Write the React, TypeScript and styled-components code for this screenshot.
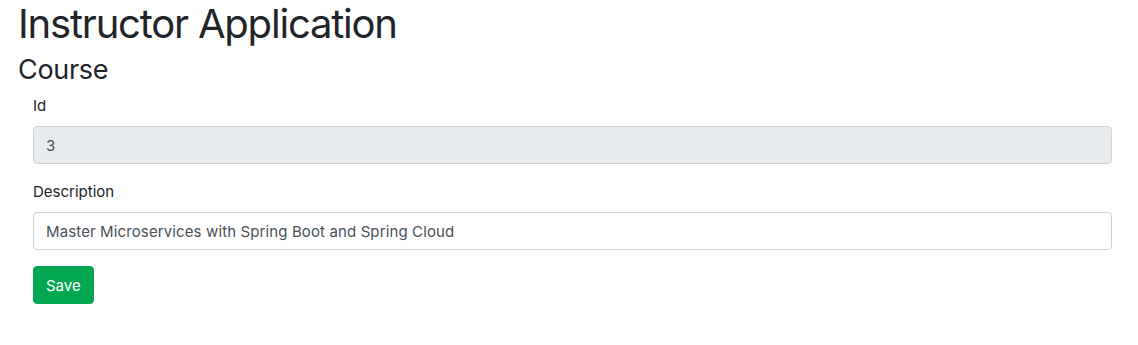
import React from "react";
import styled, { createGlobalStyle } from "styled-components";

const GlobalStyle = createGlobalStyle`
  html, body {
    margin: 0;
    padding: 0;
    background: #fff;
  }
  body {
    font-family: Inter, "Liberation Sans", Arial, sans-serif;
    font-size: 16px;
    line-height: 1.5;
    color: #212529;
  }
  *, *::before, *::after {
    box-sizing: border-box;
  }
`;

const Page = styled.div`
  padding: 0 11px 0 18px;
`;

const Title = styled.h1`
  margin: 0 0 6px;
  font-size: 40px;
  font-weight: 400;
  line-height: 1.2;
  letter-spacing: -1.2px;
`;

const SubTitle = styled.h2`
  margin: 0 0 8px;
  font-size: 27px;
  font-weight: 400;
  line-height: 1.2;
  letter-spacing: -0.3px;
`;

const Form = styled.form`
  padding: 0 15px;
  display: flex;
  flex-direction: column;
`;

const Field = styled.fieldset`
  border: none;
  margin: 0 0 16px;
  padding: 0;
  min-width: 0;
`;

const Label = styled.label`
  display: block;
  margin-bottom: 8px;
  font-size: 15px;
  line-height: 24px;
`;

const Input = styled.input`
  display: block;
  width: 100%;
  height: 38px;
  padding: 6px 12px;
  font-family: inherit;
  font-size: 15px;
  letter-spacing: 0.12px;
  color: #495057;
  background: ${(p) => (p.disabled ? "#e9ecef" : "#fff")};
  border: 1px solid #ced4da;
  border-radius: 4px;
  outline: none;
`;

const SaveButton = styled.button`
  align-self: flex-start;
  height: 38px;
  padding: 6px 12px;
  font-family: inherit;
  font-size: 15px;
  color: #fff;
  background: #03a651;
  border: 1px solid #03a651;
  border-radius: 4px;
  cursor: pointer;
`;

export default function App() {
  return (
    <Page>
      <GlobalStyle />
      <Title>Instructor Application</Title>
      <SubTitle>Course</SubTitle>
      <Form onSubmit={(e) => e.preventDefault()}>
        <Field>
          <Label>Id</Label>
          <Input type="text" value="3" disabled readOnly />
        </Field>
        <Field>
          <Label>Description</Label>
          <Input
            type="text"
            defaultValue="Master Microservices with Spring Boot and Spring Cloud"
          />
        </Field>
        <SaveButton type="submit">Save</SaveButton>
      </Form>
    </Page>
  );
}
